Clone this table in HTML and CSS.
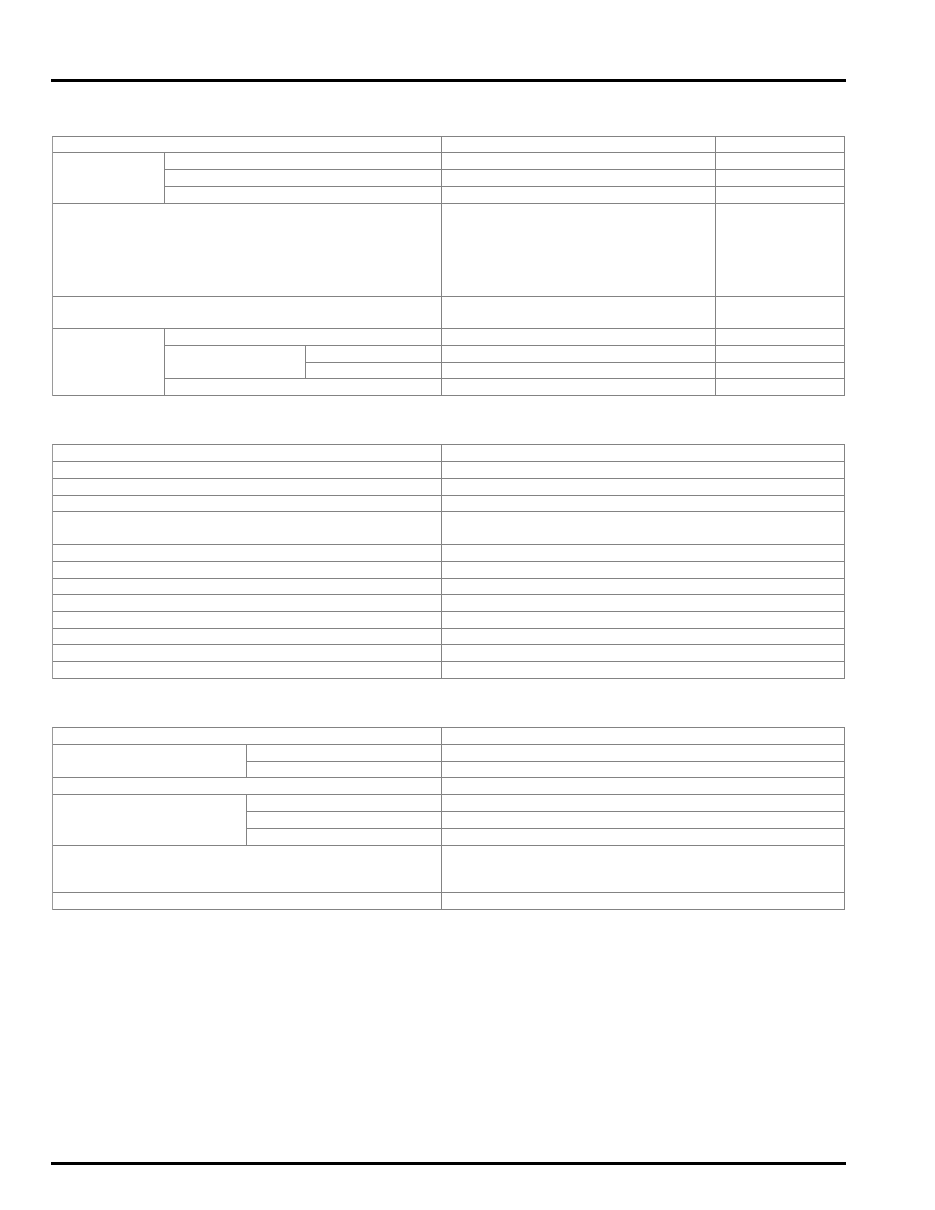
FILE: index.html
```html
<!DOCTYPE html>
<html>
<head>
<meta charset="utf-8">
<link rel="stylesheet" href="styles.css">
</head>
<body>
<div class="page">
  <div class="rule top"></div>

  <table class="grid t1">
    <colgroup>
      <col class="c1a"><col class="c1b"><col class="c1c"><col class="c1d"><col class="c1e">
    </colgroup>
    <tr class="h163"><td colspan="3"></td><td></td><td></td></tr>
    <tr class="h17"><td rowspan="3"></td><td colspan="2"></td><td></td><td></td></tr>
    <tr class="h17"><td colspan="2"></td><td></td><td></td></tr>
    <tr class="h17"><td colspan="2"></td><td></td><td></td></tr>
    <tr class="h93"><td colspan="3"></td><td></td><td></td></tr>
    <tr class="h32"><td colspan="3"></td><td></td><td></td></tr>
    <tr class="h17"><td rowspan="4"></td><td colspan="2"></td><td></td><td></td></tr>
    <tr class="h17"><td rowspan="2"></td><td></td><td></td><td></td></tr>
    <tr class="h167"><td></td><td></td><td></td></tr>
    <tr class="h163"><td colspan="2"></td><td></td><td></td></tr>
  </table>

  <table class="grid t2">
    <colgroup>
      <col class="c2a"><col class="c2b">
    </colgroup>
    <tr class="h17"><td></td><td></td></tr>
    <tr class="h17"><td></td><td></td></tr>
    <tr class="h17"><td></td><td></td></tr>
    <tr class="h16"><td></td><td></td></tr>
    <tr class="h33"><td></td><td></td></tr>
    <tr class="h167"><td></td><td></td></tr>
    <tr class="h17"><td></td><td></td></tr>
    <tr class="h16"><td></td><td></td></tr>
    <tr class="h17"><td></td><td></td></tr>
    <tr class="h17"><td></td><td></td></tr>
    <tr class="h16"><td></td><td></td></tr>
    <tr class="h17"><td></td><td></td></tr>
    <tr class="h17"><td></td><td></td></tr>
  </table>

  <table class="grid t3">
    <colgroup>
      <col class="c3a"><col class="c3b"><col class="c3c">
    </colgroup>
    <tr class="h167"><td colspan="2"></td><td></td></tr>
    <tr class="h167"><td rowspan="2"></td><td></td><td></td></tr>
    <tr class="h167"><td></td><td></td></tr>
    <tr class="h17"><td colspan="2"></td><td></td></tr>
    <tr class="h17"><td rowspan="3"></td><td></td><td></td></tr>
    <tr class="h17"><td></td><td></td></tr>
    <tr class="h167"><td></td><td></td></tr>
    <tr class="h473"><td colspan="2"></td><td></td></tr>
    <tr class="h167"><td colspan="2"></td><td></td></tr>
  </table>

  <div class="rule bottom"></div>
</div>
</body>
</html>
```

FILE: styles.css
```css
html, body {
  margin: 0;
  padding: 0;
  background: #ffffff;
}

.page {
  width: 935px;
  padding-top: 79px;
  font-family: "Liberation Sans", Arial, sans-serif;
}

.rule {
  margin-left: 51px;
  width: 795px;
  height: 3px;
  background: #000000;
}

.rule.top {
  margin-bottom: 53.5px;
}

.rule.bottom {
  margin-top: 251.5px;
}

.grid {
  margin-left: 51.7px;
  width: 793px;
  table-layout: fixed;
  border-collapse: separate;
  border-spacing: 0;
  border-top: 1px solid #838383;
  border-left: 1px solid #9a9a9a;
}

.grid td {
  padding: 0;
  border-right: 1px solid #838383;
  border-bottom: 1px solid #838383;
}

.t2, .t3 {
  margin-top: 48px;
}

.c1a { width: 112.3px; }
.c1b { width: 141px; }
.c1c { width: 136.4px; }
.c1d { width: 273.6px; }
.c1e { width: 129px; }

.c2a { width: 389.7px; }
.c2b { width: 402.6px; }

.c3a { width: 194.7px; }
.c3b { width: 195px; }
.c3c { width: 402.6px; }

.h16 { height: 16.3px; }
.h163 { height: 16.3px; }
.h167 { height: 16.7px; }
.h17 { height: 17px; }
.h32 { height: 32px; }
.h33 { height: 33px; }
.h93 { height: 93px; }
.h473 { height: 47.3px; }
```
